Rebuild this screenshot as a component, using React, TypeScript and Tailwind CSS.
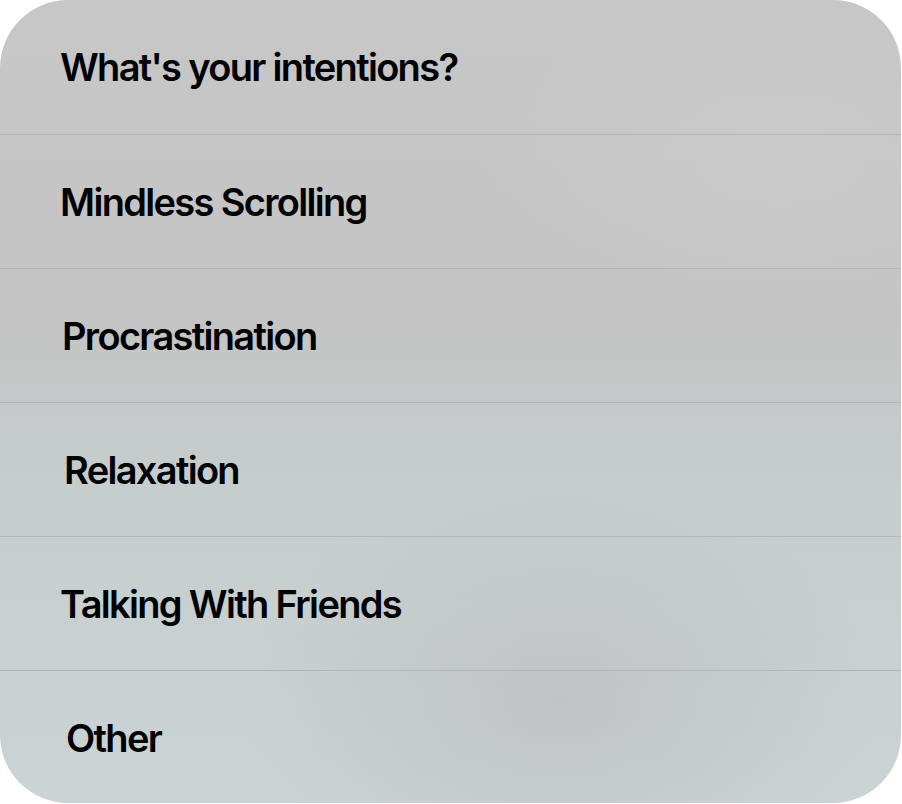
const rows = [
  { label: "What's your intentions?", pad: "pl-[60px]" },
  { label: "Mindless Scrolling", pad: "pl-[60px]" },
  { label: "Procrastination", pad: "pl-[62px]" },
  { label: "Relaxation", pad: "pl-[64px]" },
  { label: "Talking With Friends", pad: "pl-[60px]" },
  { label: "Other", pad: "pl-[66px]" },
];

export default function App() {
  return (
    <div className="w-[902px] h-[804px] bg-white">
      <div className="relative w-[901px] h-[803px] rounded-[68px] overflow-hidden bg-[linear-gradient(180deg,#c7c7c7_0%,#c4c4c4_40%,#c6cdcd_60%,#cad4d4_100%)] font-['Inter',sans-serif] text-black">
        <div className="absolute inset-0 bg-[radial-gradient(ellipse_320px_220px_at_560px_700px,rgba(190,190,192,0.7),rgba(190,190,192,0))]" />
        <div className="absolute inset-0 bg-[radial-gradient(ellipse_300px_160px_at_780px_160px,rgba(205,205,205,0.6),rgba(205,205,205,0))]" />
        <div className="relative flex flex-col">
          {rows.map((r, i) => (
            <div
              key={r.label}
              className={`flex items-center shrink-0 ${i > 0 ? "h-[134px] border-t border-[#b2b6b6]" : "h-[134px]"} ${r.pad}`}
            >
              <span className="text-[38px] font-semibold tracking-[-0.044em] leading-none">{r.label}</span>
            </div>
          ))}
        </div>
      </div>
    </div>
  );
}
